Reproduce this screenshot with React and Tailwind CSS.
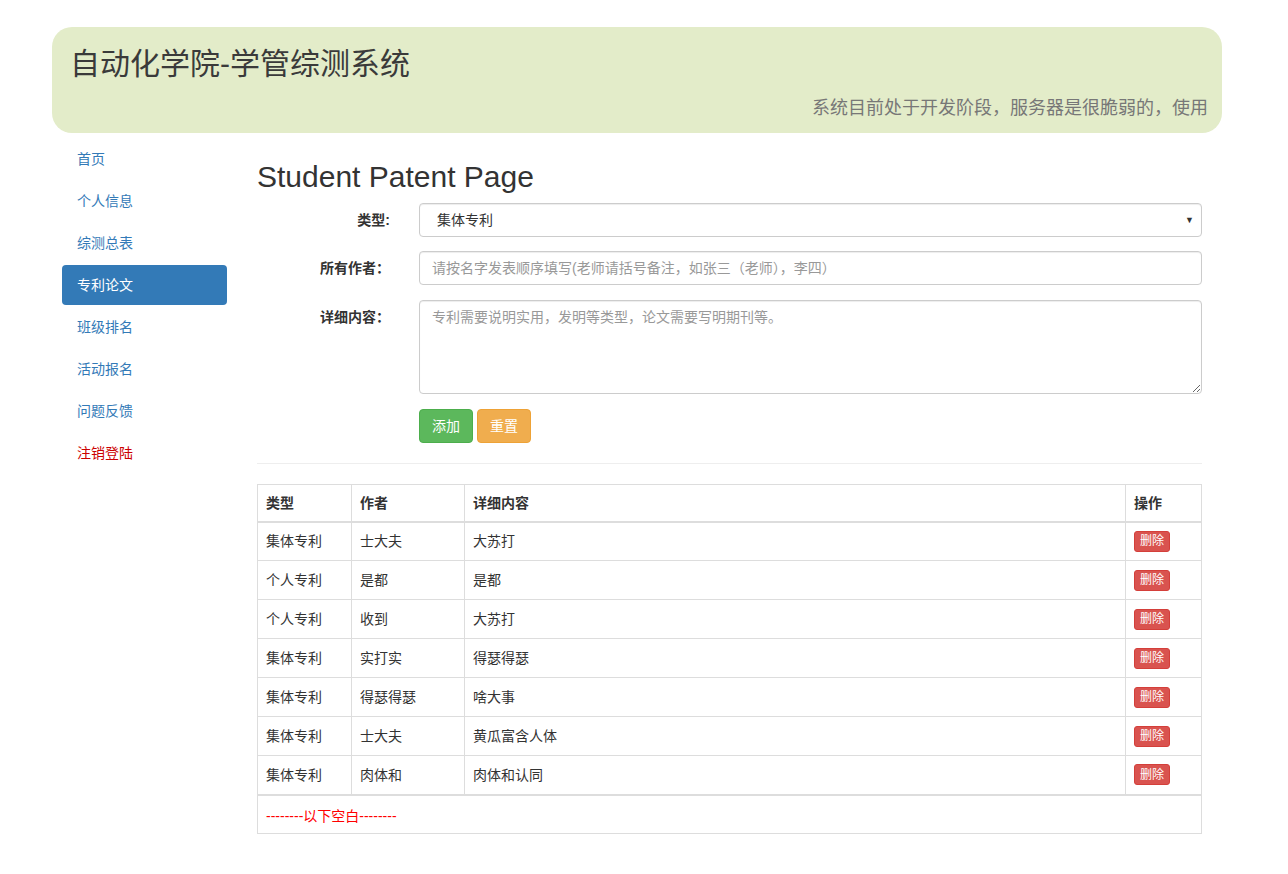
import React from "react";

const navItems = ["首页", "个人信息", "综测总表", "专利论文", "班级排名", "活动报名", "问题反馈"];

const rows = [
  ["集体专利", "士大夫", "大苏打"],
  ["个人专利", "是都", "是都"],
  ["个人专利", "收到", "大苏打"],
  ["集体专利", "实打实", "得瑟得瑟"],
  ["集体专利", "得瑟得瑟", "啥大事"],
  ["集体专利", "士大夫", "黄瓜富含人体"],
  ["集体专利", "肉体和", "肉体和认同"],
];

export default function App() {
  return (
    <div
      className="min-h-[874px] bg-white text-[14px] leading-[20px] text-[#333]"
      style={{ fontFamily: '"Liberation Sans", "Noto Sans CJK SC", sans-serif' }}
    >
      <div className="ml-[52px] w-[1170px] pt-[27px]">
        {/* header */}
        <div className="flex h-[106px] flex-col justify-between rounded-[20px] bg-[#e3ecc9] pb-[15px] pl-[18px] pr-[14px] pt-[20px]">
          <h1 className="text-[30px] leading-[33px] text-[#3a3a3a]">自动化学院-学管综测系统</h1>
          <p className="text-right text-[18px] leading-[20px] text-[#777]">
            系统目前处于开发阶段，服务器是很脆弱的，使用
          </p>
        </div>

        <div className="flex">
          {/* sidebar */}
          <ul className="ml-[10px] mt-[6px] flex w-[165px] flex-col gap-[2px]">
            {navItems.map((item) => (
              <li key={item}>
                <a
                  className={
                    item === "专利论文"
                      ? "block rounded-[4px] bg-[#337ab7] px-[15px] py-[10px] text-white"
                      : "block px-[15px] py-[10px] text-[#337ab7]"
                  }
                >
                  {item}
                </a>
              </li>
            ))}
            <li>
              <a className="block px-[15px] py-[10px] text-[#cc0000]">注销登陆</a>
            </li>
          </ul>

          {/* main */}
          <div className="ml-[30px] w-[945px]">
            <h2 className="mb-[10px] mt-[27px] text-[30px] leading-[33px] text-[#333]">Student Patent Page</h2>

            <div className="flex flex-col">
              <div className="mb-[14px] flex">
                <label className="w-[148px] pr-[15px] pt-[7px] text-right font-bold">类型:</label>
                <div className="ml-[14px] flex h-[34px] flex-1 items-center justify-between rounded-[4px] border border-[#ccc] pl-[17px] pr-[7px] shadow-[inset_0_1px_1px_rgba(0,0,0,0.075)]">
                  <span>集体专利</span>
                  <span className="text-[9px] text-[#333]">▼</span>
                </div>
              </div>

              <div className="mb-[15px] flex">
                <label className="w-[148px] pr-[15px] pt-[7px] text-right font-bold">所有作者：</label>
                <input
                  readOnly
                  placeholder="请按名字发表顺序填写(老师请括号备注，如张三（老师），李四）"
                  className="ml-[14px] h-[34px] flex-1 rounded-[4px] border border-[#ccc] px-[12px] shadow-[inset_0_1px_1px_rgba(0,0,0,0.075)] outline-none placeholder:text-[#999]"
                />
              </div>

              <div className="mb-[15px] flex">
                <label className="w-[148px] pr-[15px] pt-[7px] text-right font-bold">详细内容：</label>
                <textarea
                  readOnly
                  placeholder="专利需要说明实用，发明等类型，论文需要写明期刊等。"
                  className="ml-[14px] h-[94px] flex-1 rounded-[4px] border border-[#ccc] px-[12px] py-[6px] shadow-[inset_0_1px_1px_rgba(0,0,0,0.075)] outline-none placeholder:text-[#999]"
                />
              </div>

              <div className="ml-[162px] flex gap-[4px]">
                <button className="h-[34px] rounded-[4px] border border-[#4cae4c] bg-[#5cb85c] px-[12px] text-white">添加</button>
                <button className="h-[34px] rounded-[4px] border border-[#eea236] bg-[#f0ad4e] px-[12px] text-white">重置</button>
              </div>
            </div>

            <hr className="my-[20px] border-t border-[#eee]" />

            <table className="w-full border-collapse border border-[#ddd]">
              <thead>
                <tr className="h-[37px] border-b-2 border-[#ddd]">
                  <th className="w-[94px] border-r border-[#ddd] px-[8px] text-left">类型</th>
                  <th className="w-[113px] border-r border-[#ddd] px-[8px] text-left">作者</th>
                  <th className="border-r border-[#ddd] px-[8px] text-left">详细内容</th>
                  <th className="w-[76px] px-[8px] text-left">操作</th>
                </tr>
              </thead>
              <tbody>
                {rows.map((r, i) => (
                  <tr key={i} className="h-[39px] border-t border-[#ddd]">
                    <td className="border-r border-[#ddd] px-[8px]">{r[0]}</td>
                    <td className="border-r border-[#ddd] px-[8px]">{r[1]}</td>
                    <td className="border-r border-[#ddd] px-[8px]">{r[2]}</td>
                    <td className="px-[8px]">
                      <button className="flex h-[21px] items-center rounded-[3px] border border-[#d43f3a] bg-[#d9534f] px-[5px] text-[12px] text-white">
                        删除
                      </button>
                    </td>
                  </tr>
                ))}
              </tbody>
              <tbody className="border-t-2 border-[#ddd]">
                <tr className="h-[39px]">
                  <td colSpan={4} className="px-[8px] pt-[3px] text-[#ff0000]">
                    --------以下空白--------
                  </td>
                </tr>
              </tbody>
            </table>
          </div>
        </div>
      </div>
    </div>
  );
}
